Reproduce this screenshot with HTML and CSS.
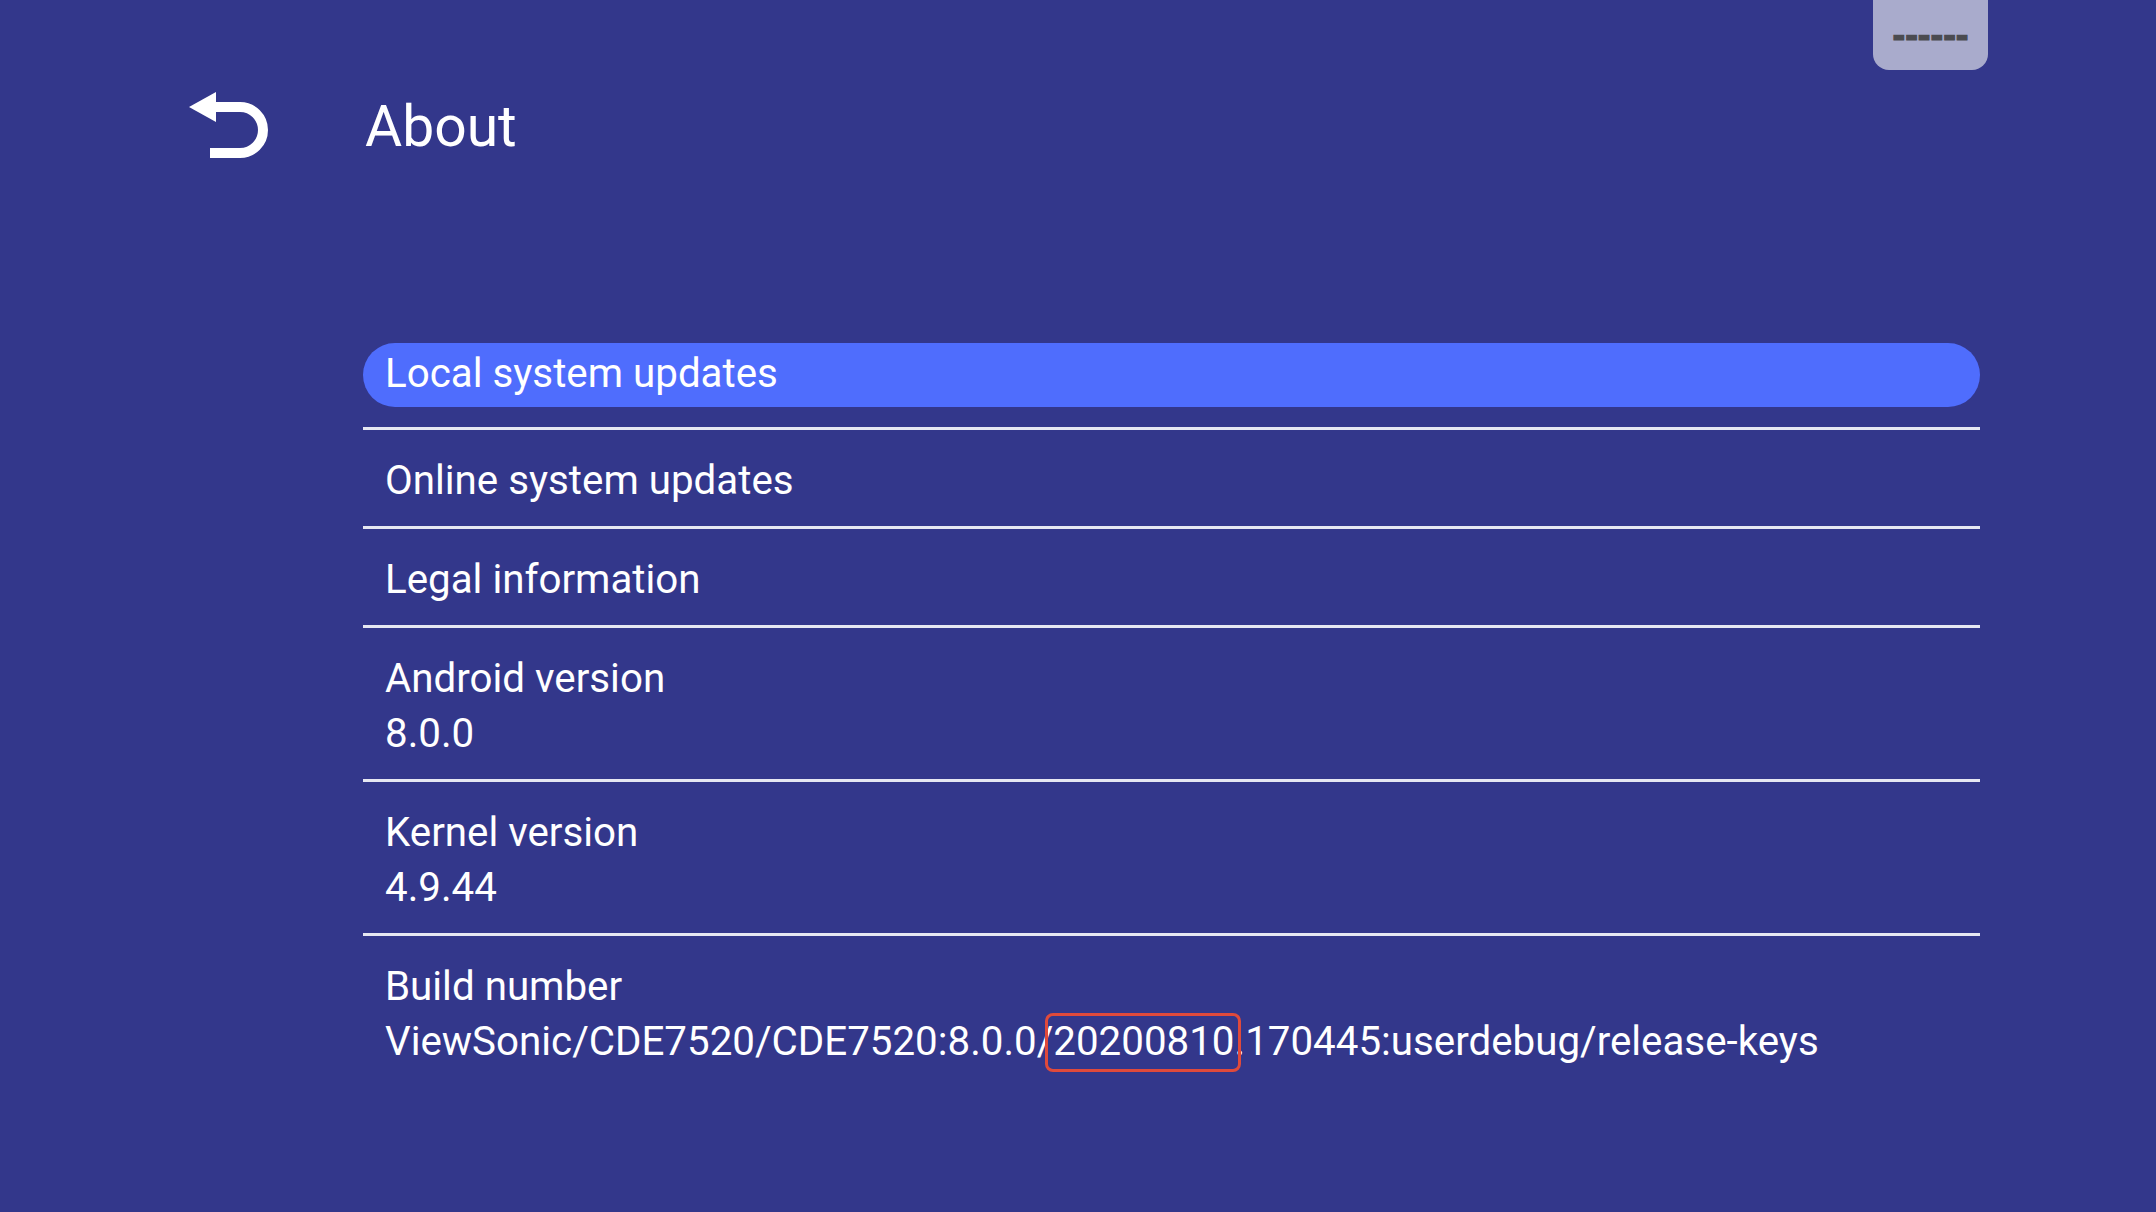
FILE: index.html
```html
<!DOCTYPE html>
<html lang="en">
<head>
<meta charset="utf-8">
<title>About</title>
<link rel="stylesheet" href="styles.css">
</head>
<body>
<div class="screen">
  <div class="tab"><span class="tab-dashes">------</span></div>
  <header class="header">
    <svg class="back" width="80" height="66" viewBox="0 0 80 66" aria-hidden="true">
      <polygon points="0,15 27,0 27,30" fill="#fff"/>
      <path d="M24 15 H51 A22.5 22.5 0 0 1 51 61 H21" fill="none" stroke="#fff" stroke-width="10"/>
    </svg>
    <h1 class="title">About</h1>
  </header>
  <ul class="list">
    <li class="item item-focused"><span class="label">Local system updates</span></li>
    <li class="item"><span class="label">Online system updates</span></li>
    <li class="item"><span class="label">Legal information</span></li>
    <li class="item"><span class="label">Android version</span><span class="value">8.0.0</span></li>
    <li class="item"><span class="label">Kernel version</span><span class="value">4.9.44</span></li>
    <li class="item item-last"><span class="label">Build number</span><span class="value">ViewSonic/CDE7520/CDE7520:8.0.0/<span class="mark">20200810</span>.170445:userdebug/release-keys</span></li>
  </ul>
</div>
</body>
</html>
```
FILE: styles.css
```css
html, body {
  margin: 0;
  padding: 0;
  background: #33378b;
}
body {
  font-family: Roboto, "Noto Sans", "Liberation Sans", sans-serif;
  color: #ffffff;
}
.screen {
  position: relative;
  width: 2156px;
  height: 1212px;
  overflow: hidden;
}
.tab {
  position: absolute;
  left: 1873px;
  top: 0;
  width: 115px;
  height: 70px;
  background: #a9abcc;
  border-radius: 0 0 16px 16px;
  display: flex;
  justify-content: center;
  align-items: flex-start;
}
.tab-dashes {
  display: block;
  font-family: "Liberation Sans", sans-serif;
  font-weight: 700;
  font-size: 38px;
  line-height: 46px;
  margin-top: 12px;
  color: #4b4b50;
  -webkit-text-stroke: 1.2px #4b4b50;
}
.header {
  display: flex;
  align-items: flex-start;
  padding: 92px 0 0 189px;
  gap: 96px;
}
.back {
  display: block;
  flex: none;
}
.title {
  margin: 0;
  font-weight: 400;
  font-size: 57px;
  line-height: 70px;
}
.list {
  list-style: none;
  margin: 181px 0 0 363px;
  padding: 0;
  width: 1617px;
}
.item {
  display: flex;
  flex-direction: column;
  padding: 23px 22px 18px;
  border-bottom: 3px solid #e6e7f2;
  font-size: 40.3px;
  line-height: 55px;
}
.item-focused {
  background: #4f6dfd;
  border-radius: 32px;
  border-bottom: none;
  padding: 3px 22px 6px;
  margin-bottom: 20px;
  position: relative;
}
.item-focused::after {
  content: "";
  position: absolute;
  left: 0;
  right: 0;
  bottom: -23px;
  height: 3px;
  background: #e6e7f2;
}
.item-focused + .item {
  padding-top: 26px;
}
.item-last {
  border-bottom: none;
}
.value {
  white-space: nowrap;
}
.mark {
  position: relative;
}
.mark::after {
  content: "";
  position: absolute;
  left: -8px;
  right: -6px;
  top: -5px;
  bottom: -7px;
  border: 3px solid #e04a3b;
  border-radius: 8px;
}
```
